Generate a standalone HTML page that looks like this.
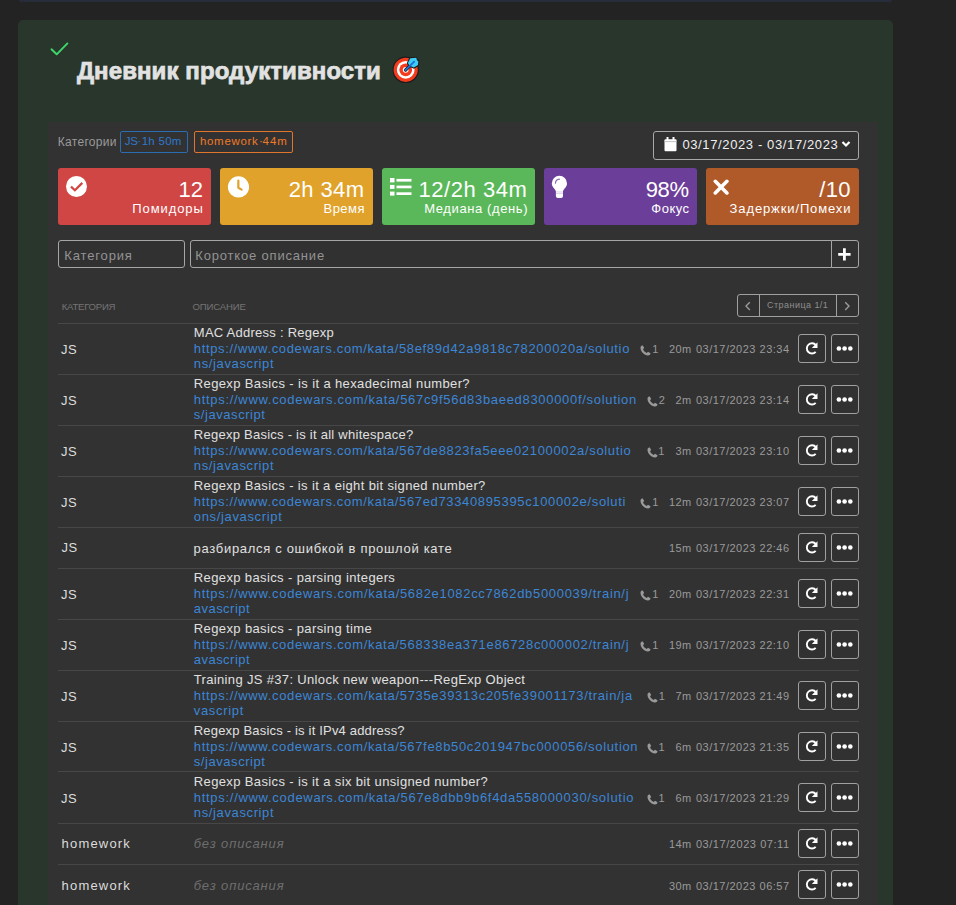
<!DOCTYPE html>
<html><head><meta charset="utf-8">
<style>
*{box-sizing:border-box;margin:0;padding:0}
html,body{width:956px;height:905px;overflow:hidden;background:#232323}
body{position:relative;font-family:"Liberation Sans",sans-serif;color:#ddd}
.a{position:absolute}
.t{position:absolute;white-space:pre;line-height:1}
#strip{left:19px;top:0;width:873px;height:2px;background:#262c39;border-radius:0 0 4px 4px}
#card{left:18px;top:20px;width:875px;height:920px;background:#29362c;border-radius:5px}
#panel{left:48px;top:122px;width:830px;height:800px;background:#323232}
.tag{position:absolute;top:131px;height:22px;border:1px solid;border-radius:2px}
.stat{position:absolute;top:168px;width:153px;height:57px;border-radius:3px}
.inp{position:absolute;top:240px;height:28px;border:1px solid #a6a6a6;background:#313131}
.btn{position:absolute;width:29px;height:29px;border:1px solid #a0a0a0;border-radius:3px;background:#313131}
.rl{position:absolute;left:58px;width:801px;height:1px;background:#474747}
</style></head>
<body>
<div id="strip" class="a"></div>
<div id="card" class="a"></div>
<svg class="a" style="left:48px;top:40px" width="24" height="18" viewBox="0 0 24 18"><path d="M3.5 9.3 L8.7 14.3 L19.4 3.4" fill="none" stroke="#3fd86a" stroke-width="1.9" stroke-linecap="round" stroke-linejoin="round"/></svg>
<svg class="a" style="left:391px;top:55px" width="30" height="30" viewBox="0 0 30 30">
<circle cx="14.7" cy="14.8" r="13.2" fill="#1c1c1c"/>
<circle cx="14.7" cy="14.8" r="12.1" fill="#f23c1d"/>
<circle cx="14.7" cy="14.8" r="8.9" fill="#fff"/>
<circle cx="14.7" cy="14.8" r="6.4" fill="#f23c1d"/>
<circle cx="14.7" cy="14.8" r="2.9" fill="#fff"/>
<path d="M14.6 15 L22 7.6" stroke="#1c1c1c" stroke-width="3.2" stroke-linecap="round"/>
<path d="M18.6 2.3 L26 1.8 L26.8 4.6 L28.4 5.2 L28 10.8 L23 13.8 L17.6 11.4 L15.8 8.2 Z" fill="#1c1c1c"/>
<path d="M19.3 3.3 L25.3 2.8 L26 5.4 L27.3 6 L27 10.1 L22.8 12.6 L18.4 10.6 L16.9 8 Z" fill="#3ccdf4"/>
<path d="M14.6 15 L23.2 6.6" stroke="#1f6fd8" stroke-width="1.8" stroke-linecap="round"/>
</svg>
<div id="panel" class="a"></div>
<div class="tag" style="left:120px;width:68px;border-color:#2a6db0"></div>
<div class="tag" style="left:194px;width:99px;border-color:#e0762c"></div>
<div class="a" style="left:653px;top:131px;width:206px;height:29px;border:1px solid #a8a8a8;border-radius:3px;background:#313131"></div>
<svg class="a" style="left:664px;top:137px" width="13" height="15" viewBox="0 0 13 15"><rect x="0.5" y="2.2" width="12" height="12" rx="1" fill="#fff"/><rect x="2.5" y="0" width="2" height="3" fill="#fff"/><rect x="8.5" y="0" width="2" height="3" fill="#fff"/><rect x="0.5" y="4.2" width="12" height="0.9" fill="#bbb"/></svg>
<svg class="a" style="left:841px;top:140px" width="10" height="8" viewBox="0 0 10 8"><path d="M1.5 2 L5 5.5 L8.5 2" fill="none" stroke="#fff" stroke-width="2.2"/></svg>

<div class="stat" style="left:58px;background:#d04644"><svg class="a" style="left:8px;top:8px" width="21" height="21" viewBox="0 0 21 21"><circle cx="10.5" cy="10.5" r="10.5" fill="#fff"/><path d="M5 10.6 L8.9 14.3 L16.3 6.9" fill="none" stroke="#d04644" stroke-width="2.2"/></svg></div>
<div class="stat" style="left:220px;background:#e0a22a"><svg class="a" style="left:7px;top:8px" width="22" height="22" viewBox="0 0 22 22"><circle cx="11.5" cy="10.9" r="10.6" fill="#fff"/><path d="M11.35 4.6 L11.35 11.7 L14.6 13.6" fill="none" stroke="#e0a22a" stroke-width="2.2" stroke-linecap="round" stroke-linejoin="round"/></svg></div>
<div class="stat" style="left:382px;background:#5bb85a"><svg class="a" style="left:7px;top:10px" width="23" height="18" viewBox="0 0 23 18"><rect x="1" y="0" width="4.5" height="4.4" fill="#fff"/><rect x="1" y="6.9" width="4.5" height="4" fill="#fff"/><rect x="1" y="13.6" width="4.5" height="4" fill="#fff"/><rect x="7.5" y="0.9" width="15" height="2.7" fill="#fff"/><rect x="7.5" y="7.6" width="15" height="2.7" fill="#fff"/><rect x="7.5" y="14.3" width="15" height="2.7" fill="#fff"/></svg></div>
<div class="stat" style="left:544px;background:#6b3e99"><svg class="a" style="left:7px;top:7px" width="17" height="24" viewBox="0 0 17 24"><path d="M4.9 16.4 C4.5 13.8 0.8 12.2 0.8 8.4 A7.6 7.6 0 0 1 16 8.4 C16 12.2 12.4 13.8 12 16.4 Z" fill="#fff"/><path d="M4.9 16.2 L12 16.2 L12 21 Q12 22.9 10 22.9 L6.9 22.9 Q4.9 22.9 4.9 21 Z" fill="#fff"/><rect x="4.9" y="17.7" width="7.1" height="0.9" fill="#cdbde0"/><path d="M4.4 8.1 C4.6 6 6.3 4.4 8.4 4.2" fill="none" stroke="#8d6ab5" stroke-width="1.2" stroke-linecap="round"/></svg></div>
<div class="stat" style="left:706px;background:#b05a2a"><svg class="a" style="left:7px;top:11px" width="16" height="16" viewBox="0 0 16 16"><path d="M2.3 2.3 L13.9 13.9 M13.9 2.3 L2.3 13.9" stroke="#fff" stroke-width="3.6" stroke-linecap="round"/></svg></div>

<div class="inp" style="left:58px;width:127px;border-radius:3px"></div>
<div class="inp" style="left:190px;width:642px;border-radius:3px 0 0 3px"></div>
<div class="inp" style="left:831px;width:28px;border-radius:0 3px 3px 0"></div>
<svg class="a" style="left:837px;top:247px" width="15" height="15" viewBox="0 0 15 15"><path d="M7.4 1.2 V13.6 M1.2 7.4 H13.6" stroke="#fff" stroke-width="2.8"/></svg>

<div class="a" style="left:737px;top:294px;width:122px;height:23px;border:1px solid #a0a0a0;border-radius:3px;background:#313131"></div>
<div class="a" style="left:759px;top:294px;width:1px;height:23px;background:#a0a0a0"></div>
<div class="a" style="left:836px;top:294px;width:1px;height:23px;background:#a0a0a0"></div>
<svg class="a" style="left:743px;top:301px" width="10" height="10" viewBox="0 0 10 10"><path d="M6.8 1.3 L3 5.1 L6.8 8.9" fill="none" stroke="#9a9a9a" stroke-width="1.4"/></svg>
<svg class="a" style="left:842px;top:301px" width="10" height="10" viewBox="0 0 10 10"><path d="M3.2 1.3 L7 5.1 L3.2 8.9" fill="none" stroke="#9a9a9a" stroke-width="1.4"/></svg>
<div class="rl" style="top:323px"></div>
<svg class="a" style="left:640.4px;top:345.0px" width="11" height="11" viewBox="0 0 11 11"><path d="M2.2 0.6 C1.2 0.9 0.4 1.8 0.5 3 C0.8 6.8 4.2 10.2 8 10.5 C9.2 10.6 10.1 9.8 10.4 8.8 L10.5 8.2 L8 6.8 L6.7 8 C5 7.2 3.8 6 3 4.3 L4.2 3 L2.8 0.5 Z" fill="#9a9a9a"/></svg>
<div class="btn" style="left:798px;top:334px;width:28px"></div><div class="btn" style="left:831px;top:334px;width:28px"></div>
<svg class="a" style="left:805px;top:342px" width="14" height="14" viewBox="0 0 14 14"><path d="M10.86 3.12 A5.1 5.1 0 1 0 10.68 9.88" fill="none" stroke="#fff" stroke-width="1.9"/><path d="M12.5 0.3 L12.5 6.1 L6.8 6.1 Z" fill="#fff"/></svg>
<svg class="a" style="left:836px;top:345px" width="18" height="7" viewBox="0 0 18 7"><circle cx="2.9" cy="3.5" r="2.3" fill="#fff"/><circle cx="8.6" cy="3.5" r="2.3" fill="#fff"/><circle cx="14.3" cy="3.5" r="2.3" fill="#fff"/></svg>
<div class="rl" style="top:374px"></div>
<svg class="a" style="left:647.0px;top:396.0px" width="11" height="11" viewBox="0 0 11 11"><path d="M2.2 0.6 C1.2 0.9 0.4 1.8 0.5 3 C0.8 6.8 4.2 10.2 8 10.5 C9.2 10.6 10.1 9.8 10.4 8.8 L10.5 8.2 L8 6.8 L6.7 8 C5 7.2 3.8 6 3 4.3 L4.2 3 L2.8 0.5 Z" fill="#9a9a9a"/></svg>
<div class="btn" style="left:798px;top:385px;width:28px"></div><div class="btn" style="left:831px;top:385px;width:28px"></div>
<svg class="a" style="left:805px;top:393px" width="14" height="14" viewBox="0 0 14 14"><path d="M10.86 3.12 A5.1 5.1 0 1 0 10.68 9.88" fill="none" stroke="#fff" stroke-width="1.9"/><path d="M12.5 0.3 L12.5 6.1 L6.8 6.1 Z" fill="#fff"/></svg>
<svg class="a" style="left:836px;top:396px" width="18" height="7" viewBox="0 0 18 7"><circle cx="2.9" cy="3.5" r="2.3" fill="#fff"/><circle cx="8.6" cy="3.5" r="2.3" fill="#fff"/><circle cx="14.3" cy="3.5" r="2.3" fill="#fff"/></svg>
<div class="rl" style="top:425px"></div>
<svg class="a" style="left:646.5px;top:447.0px" width="11" height="11" viewBox="0 0 11 11"><path d="M2.2 0.6 C1.2 0.9 0.4 1.8 0.5 3 C0.8 6.8 4.2 10.2 8 10.5 C9.2 10.6 10.1 9.8 10.4 8.8 L10.5 8.2 L8 6.8 L6.7 8 C5 7.2 3.8 6 3 4.3 L4.2 3 L2.8 0.5 Z" fill="#9a9a9a"/></svg>
<div class="btn" style="left:798px;top:436px;width:28px"></div><div class="btn" style="left:831px;top:436px;width:28px"></div>
<svg class="a" style="left:805px;top:444px" width="14" height="14" viewBox="0 0 14 14"><path d="M10.86 3.12 A5.1 5.1 0 1 0 10.68 9.88" fill="none" stroke="#fff" stroke-width="1.9"/><path d="M12.5 0.3 L12.5 6.1 L6.8 6.1 Z" fill="#fff"/></svg>
<svg class="a" style="left:836px;top:447px" width="18" height="7" viewBox="0 0 18 7"><circle cx="2.9" cy="3.5" r="2.3" fill="#fff"/><circle cx="8.6" cy="3.5" r="2.3" fill="#fff"/><circle cx="14.3" cy="3.5" r="2.3" fill="#fff"/></svg>
<div class="rl" style="top:476px"></div>
<svg class="a" style="left:640.4px;top:498.0px" width="11" height="11" viewBox="0 0 11 11"><path d="M2.2 0.6 C1.2 0.9 0.4 1.8 0.5 3 C0.8 6.8 4.2 10.2 8 10.5 C9.2 10.6 10.1 9.8 10.4 8.8 L10.5 8.2 L8 6.8 L6.7 8 C5 7.2 3.8 6 3 4.3 L4.2 3 L2.8 0.5 Z" fill="#9a9a9a"/></svg>
<div class="btn" style="left:798px;top:487px;width:28px"></div><div class="btn" style="left:831px;top:487px;width:28px"></div>
<svg class="a" style="left:805px;top:495px" width="14" height="14" viewBox="0 0 14 14"><path d="M10.86 3.12 A5.1 5.1 0 1 0 10.68 9.88" fill="none" stroke="#fff" stroke-width="1.9"/><path d="M12.5 0.3 L12.5 6.1 L6.8 6.1 Z" fill="#fff"/></svg>
<svg class="a" style="left:836px;top:498px" width="18" height="7" viewBox="0 0 18 7"><circle cx="2.9" cy="3.5" r="2.3" fill="#fff"/><circle cx="8.6" cy="3.5" r="2.3" fill="#fff"/><circle cx="14.3" cy="3.5" r="2.3" fill="#fff"/></svg>
<div class="rl" style="top:527px"></div>
<div class="btn" style="left:798px;top:533px;width:28px"></div><div class="btn" style="left:831px;top:533px;width:28px"></div>
<svg class="a" style="left:805px;top:541px" width="14" height="14" viewBox="0 0 14 14"><path d="M10.86 3.12 A5.1 5.1 0 1 0 10.68 9.88" fill="none" stroke="#fff" stroke-width="1.9"/><path d="M12.5 0.3 L12.5 6.1 L6.8 6.1 Z" fill="#fff"/></svg>
<svg class="a" style="left:836px;top:544px" width="18" height="7" viewBox="0 0 18 7"><circle cx="2.9" cy="3.5" r="2.3" fill="#fff"/><circle cx="8.6" cy="3.5" r="2.3" fill="#fff"/><circle cx="14.3" cy="3.5" r="2.3" fill="#fff"/></svg>
<div class="rl" style="top:568px"></div>
<svg class="a" style="left:640.4px;top:590.0px" width="11" height="11" viewBox="0 0 11 11"><path d="M2.2 0.6 C1.2 0.9 0.4 1.8 0.5 3 C0.8 6.8 4.2 10.2 8 10.5 C9.2 10.6 10.1 9.8 10.4 8.8 L10.5 8.2 L8 6.8 L6.7 8 C5 7.2 3.8 6 3 4.3 L4.2 3 L2.8 0.5 Z" fill="#9a9a9a"/></svg>
<div class="btn" style="left:798px;top:579px;width:28px"></div><div class="btn" style="left:831px;top:579px;width:28px"></div>
<svg class="a" style="left:805px;top:587px" width="14" height="14" viewBox="0 0 14 14"><path d="M10.86 3.12 A5.1 5.1 0 1 0 10.68 9.88" fill="none" stroke="#fff" stroke-width="1.9"/><path d="M12.5 0.3 L12.5 6.1 L6.8 6.1 Z" fill="#fff"/></svg>
<svg class="a" style="left:836px;top:590px" width="18" height="7" viewBox="0 0 18 7"><circle cx="2.9" cy="3.5" r="2.3" fill="#fff"/><circle cx="8.6" cy="3.5" r="2.3" fill="#fff"/><circle cx="14.3" cy="3.5" r="2.3" fill="#fff"/></svg>
<div class="rl" style="top:619px"></div>
<svg class="a" style="left:640.4px;top:641.0px" width="11" height="11" viewBox="0 0 11 11"><path d="M2.2 0.6 C1.2 0.9 0.4 1.8 0.5 3 C0.8 6.8 4.2 10.2 8 10.5 C9.2 10.6 10.1 9.8 10.4 8.8 L10.5 8.2 L8 6.8 L6.7 8 C5 7.2 3.8 6 3 4.3 L4.2 3 L2.8 0.5 Z" fill="#9a9a9a"/></svg>
<div class="btn" style="left:798px;top:630px;width:28px"></div><div class="btn" style="left:831px;top:630px;width:28px"></div>
<svg class="a" style="left:805px;top:638px" width="14" height="14" viewBox="0 0 14 14"><path d="M10.86 3.12 A5.1 5.1 0 1 0 10.68 9.88" fill="none" stroke="#fff" stroke-width="1.9"/><path d="M12.5 0.3 L12.5 6.1 L6.8 6.1 Z" fill="#fff"/></svg>
<svg class="a" style="left:836px;top:641px" width="18" height="7" viewBox="0 0 18 7"><circle cx="2.9" cy="3.5" r="2.3" fill="#fff"/><circle cx="8.6" cy="3.5" r="2.3" fill="#fff"/><circle cx="14.3" cy="3.5" r="2.3" fill="#fff"/></svg>
<div class="rl" style="top:670px"></div>
<svg class="a" style="left:647.0px;top:692.0px" width="11" height="11" viewBox="0 0 11 11"><path d="M2.2 0.6 C1.2 0.9 0.4 1.8 0.5 3 C0.8 6.8 4.2 10.2 8 10.5 C9.2 10.6 10.1 9.8 10.4 8.8 L10.5 8.2 L8 6.8 L6.7 8 C5 7.2 3.8 6 3 4.3 L4.2 3 L2.8 0.5 Z" fill="#9a9a9a"/></svg>
<div class="btn" style="left:798px;top:681px;width:28px"></div><div class="btn" style="left:831px;top:681px;width:28px"></div>
<svg class="a" style="left:805px;top:689px" width="14" height="14" viewBox="0 0 14 14"><path d="M10.86 3.12 A5.1 5.1 0 1 0 10.68 9.88" fill="none" stroke="#fff" stroke-width="1.9"/><path d="M12.5 0.3 L12.5 6.1 L6.8 6.1 Z" fill="#fff"/></svg>
<svg class="a" style="left:836px;top:692px" width="18" height="7" viewBox="0 0 18 7"><circle cx="2.9" cy="3.5" r="2.3" fill="#fff"/><circle cx="8.6" cy="3.5" r="2.3" fill="#fff"/><circle cx="14.3" cy="3.5" r="2.3" fill="#fff"/></svg>
<div class="rl" style="top:721px"></div>
<svg class="a" style="left:646.7px;top:743.0px" width="11" height="11" viewBox="0 0 11 11"><path d="M2.2 0.6 C1.2 0.9 0.4 1.8 0.5 3 C0.8 6.8 4.2 10.2 8 10.5 C9.2 10.6 10.1 9.8 10.4 8.8 L10.5 8.2 L8 6.8 L6.7 8 C5 7.2 3.8 6 3 4.3 L4.2 3 L2.8 0.5 Z" fill="#9a9a9a"/></svg>
<div class="btn" style="left:798px;top:732px;width:28px"></div><div class="btn" style="left:831px;top:732px;width:28px"></div>
<svg class="a" style="left:805px;top:740px" width="14" height="14" viewBox="0 0 14 14"><path d="M10.86 3.12 A5.1 5.1 0 1 0 10.68 9.88" fill="none" stroke="#fff" stroke-width="1.9"/><path d="M12.5 0.3 L12.5 6.1 L6.8 6.1 Z" fill="#fff"/></svg>
<svg class="a" style="left:836px;top:743px" width="18" height="7" viewBox="0 0 18 7"><circle cx="2.9" cy="3.5" r="2.3" fill="#fff"/><circle cx="8.6" cy="3.5" r="2.3" fill="#fff"/><circle cx="14.3" cy="3.5" r="2.3" fill="#fff"/></svg>
<div class="rl" style="top:771px"></div>
<svg class="a" style="left:646.7px;top:794.0px" width="11" height="11" viewBox="0 0 11 11"><path d="M2.2 0.6 C1.2 0.9 0.4 1.8 0.5 3 C0.8 6.8 4.2 10.2 8 10.5 C9.2 10.6 10.1 9.8 10.4 8.8 L10.5 8.2 L8 6.8 L6.7 8 C5 7.2 3.8 6 3 4.3 L4.2 3 L2.8 0.5 Z" fill="#9a9a9a"/></svg>
<div class="btn" style="left:798px;top:783px;width:28px"></div><div class="btn" style="left:831px;top:783px;width:28px"></div>
<svg class="a" style="left:805px;top:791px" width="14" height="14" viewBox="0 0 14 14"><path d="M10.86 3.12 A5.1 5.1 0 1 0 10.68 9.88" fill="none" stroke="#fff" stroke-width="1.9"/><path d="M12.5 0.3 L12.5 6.1 L6.8 6.1 Z" fill="#fff"/></svg>
<svg class="a" style="left:836px;top:794px" width="18" height="7" viewBox="0 0 18 7"><circle cx="2.9" cy="3.5" r="2.3" fill="#fff"/><circle cx="8.6" cy="3.5" r="2.3" fill="#fff"/><circle cx="14.3" cy="3.5" r="2.3" fill="#fff"/></svg>
<div class="rl" style="top:823px"></div>
<div class="btn" style="left:798px;top:829px;width:28px"></div><div class="btn" style="left:831px;top:829px;width:28px"></div>
<svg class="a" style="left:805px;top:837px" width="14" height="14" viewBox="0 0 14 14"><path d="M10.86 3.12 A5.1 5.1 0 1 0 10.68 9.88" fill="none" stroke="#fff" stroke-width="1.9"/><path d="M12.5 0.3 L12.5 6.1 L6.8 6.1 Z" fill="#fff"/></svg>
<svg class="a" style="left:836px;top:840px" width="18" height="7" viewBox="0 0 18 7"><circle cx="2.9" cy="3.5" r="2.3" fill="#fff"/><circle cx="8.6" cy="3.5" r="2.3" fill="#fff"/><circle cx="14.3" cy="3.5" r="2.3" fill="#fff"/></svg>
<div class="rl" style="top:864px"></div>
<div class="btn" style="left:798px;top:870px;width:28px"></div><div class="btn" style="left:831px;top:870px;width:28px"></div>
<svg class="a" style="left:805px;top:878px" width="14" height="14" viewBox="0 0 14 14"><path d="M10.86 3.12 A5.1 5.1 0 1 0 10.68 9.88" fill="none" stroke="#fff" stroke-width="1.9"/><path d="M12.5 0.3 L12.5 6.1 L6.8 6.1 Z" fill="#fff"/></svg>
<svg class="a" style="left:836px;top:881px" width="18" height="7" viewBox="0 0 18 7"><circle cx="2.9" cy="3.5" r="2.3" fill="#fff"/><circle cx="8.6" cy="3.5" r="2.3" fill="#fff"/><circle cx="14.3" cy="3.5" r="2.3" fill="#fff"/></svg>
<div class="t" style="top:58.68px;font-size:24px;color:#e2e2e2;letter-spacing:0.095px;font-weight:bold;-webkit-text-stroke:0.75px #e2e2e2;left:76.92px;">Дневник продуктивности</div>
<div class="t" style="top:136.14px;font-size:12px;color:#9a9a9a;letter-spacing:0.321px;left:57.66px;">Категории</div>
<div class="t" style="top:135.57px;font-size:11.5px;color:#2f78cc;letter-spacing:-0.300px;left:124.78px;">JS</div>
<div class="t" style="top:135.57px;font-size:11.5px;color:#2f78cc;letter-spacing:0.000px;left:137.18px;">·</div>
<div class="t" style="top:135.57px;font-size:11.5px;color:#2f78cc;letter-spacing:0.275px;left:141.68px;">1h 50m</div>
<div class="t" style="top:135.57px;font-size:11.5px;color:#f07a28;letter-spacing:0.682px;left:199.98px;">homework</div>
<div class="t" style="top:135.57px;font-size:11.5px;color:#f07a28;letter-spacing:0.000px;left:258.88px;">·</div>
<div class="t" style="top:135.57px;font-size:11.5px;color:#f07a28;letter-spacing:0.980px;left:262.58px;">44m</div>
<div class="t" style="top:138.20px;font-size:13px;color:#f0f0f0;letter-spacing:0.622px;left:682.41px;">03/17/2023 - 03/17/2023</div>
<div class="t" style="top:179.18px;font-size:22px;color:#fff;letter-spacing:-0.104px;left:178.61px;">12</div>
<div class="t" style="top:202.00px;font-size:13px;color:#fff;letter-spacing:0.914px;left:132.31px;">Помидоры</div>
<div class="t" style="top:179.18px;font-size:22px;color:#fff;letter-spacing:0.398px;left:288.71px;">2h 34m</div>
<div class="t" style="top:202.00px;font-size:13px;color:#fff;letter-spacing:0.500px;left:323.48px;">Время</div>
<div class="t" style="top:178.98px;font-size:22px;color:#fff;letter-spacing:0.539px;left:418.51px;">12/2h 34m</div>
<div class="t" style="top:202.00px;font-size:13px;color:#fff;letter-spacing:0.609px;left:424.22px;">Медиана (день)</div>
<div class="t" style="top:179.18px;font-size:22px;color:#fff;letter-spacing:-0.383px;left:645.71px;">98%</div>
<div class="t" style="top:202.00px;font-size:13px;color:#fff;letter-spacing:0.500px;left:651.27px;">Фокус</div>
<div class="t" style="top:179.18px;font-size:22px;color:#fff;letter-spacing:0.300px;left:819.30px;">/10</div>
<div class="t" style="top:202.00px;font-size:13px;color:#fff;letter-spacing:0.876px;left:729.61px;">Задержки/Помехи</div>
<div class="t" style="top:248.50px;font-size:13px;color:#939393;letter-spacing:0.849px;left:64.32px;">Категория</div>
<div class="t" style="top:248.50px;font-size:13px;color:#939393;letter-spacing:0.818px;left:195.31px;">Короткое описание</div>
<div class="t" style="top:301.87px;font-size:9.6px;color:#747474;letter-spacing:-0.247px;left:61.67px;">КАТЕГОРИЯ</div>
<div class="t" style="top:301.87px;font-size:9.6px;color:#747474;letter-spacing:-0.190px;left:192.57px;">ОПИСАНИЕ</div>
<div class="t" style="top:301.38px;font-size:9px;color:#8e8e8e;letter-spacing:0.445px;left:767.10px;">Страница 1/1</div>
<div class="t" style="top:342.50px;font-size:13px;color:#dcdcdc;letter-spacing:0.500px;left:60.91px;">JS</div>
<div class="t" style="top:326.20px;font-size:13px;color:#e0e0e0;letter-spacing:0.255px;left:193.81px;">MAC Address : Regexp</div>
<div class="t" style="top:342.10px;font-size:13px;color:#3c86d6;letter-spacing:0.648px;left:193.81px;">https://www.codewars.com/kata/58ef89d42a9818c78200020a/solutio</div>
<div class="t" style="top:357.20px;font-size:13px;color:#3c86d6;letter-spacing:0.627px;left:193.81px;">ns/javascript</div>
<div class="t" style="top:344.19px;font-size:11px;color:#9a9a9a;letter-spacing:0.503px;left:695.90px;">03/17/2023 23:34</div>
<div class="t" style="top:344.19px;font-size:11px;color:#9a9a9a;letter-spacing:0.450px;left:668.89px;">20m</div>
<div class="t" style="top:344.19px;font-size:11px;color:#9a9a9a;letter-spacing:0.500px;left:652.27px;">1</div>
<div class="t" style="top:393.50px;font-size:13px;color:#dcdcdc;letter-spacing:0.500px;left:60.91px;">JS</div>
<div class="t" style="top:377.20px;font-size:13px;color:#e0e0e0;letter-spacing:0.373px;left:193.81px;">Regexp Basics - is it a hexadecimal number?</div>
<div class="t" style="top:393.10px;font-size:13px;color:#3c86d6;letter-spacing:0.689px;left:193.81px;">https://www.codewars.com/kata/567c9f56d83baeed8300000f/solution</div>
<div class="t" style="top:408.20px;font-size:13px;color:#3c86d6;letter-spacing:0.558px;left:193.81px;">s/javascript</div>
<div class="t" style="top:395.19px;font-size:11px;color:#9a9a9a;letter-spacing:0.503px;left:695.90px;">03/17/2023 23:14</div>
<div class="t" style="top:395.19px;font-size:11px;color:#9a9a9a;letter-spacing:0.450px;left:675.46px;">2m</div>
<div class="t" style="top:395.19px;font-size:11px;color:#9a9a9a;letter-spacing:0.500px;left:658.87px;">2</div>
<div class="t" style="top:444.50px;font-size:13px;color:#dcdcdc;letter-spacing:0.500px;left:60.91px;">JS</div>
<div class="t" style="top:428.20px;font-size:13px;color:#e0e0e0;letter-spacing:0.253px;left:193.81px;">Regexp Basics - is it all whitespace?</div>
<div class="t" style="top:444.10px;font-size:13px;color:#3c86d6;letter-spacing:0.659px;left:193.81px;">https://www.codewars.com/kata/567de8823fa5eee02100002a/solutio</div>
<div class="t" style="top:459.20px;font-size:13px;color:#3c86d6;letter-spacing:0.627px;left:193.81px;">ns/javascript</div>
<div class="t" style="top:446.19px;font-size:11px;color:#9a9a9a;letter-spacing:0.503px;left:695.90px;">03/17/2023 23:10</div>
<div class="t" style="top:446.19px;font-size:11px;color:#9a9a9a;letter-spacing:0.450px;left:675.46px;">3m</div>
<div class="t" style="top:446.19px;font-size:11px;color:#9a9a9a;letter-spacing:0.500px;left:658.37px;">1</div>
<div class="t" style="top:495.50px;font-size:13px;color:#dcdcdc;letter-spacing:0.500px;left:60.91px;">JS</div>
<div class="t" style="top:479.20px;font-size:13px;color:#e0e0e0;letter-spacing:0.361px;left:193.81px;">Regexp Basics - is it a eight bit signed number?</div>
<div class="t" style="top:495.10px;font-size:13px;color:#3c86d6;letter-spacing:0.652px;left:193.81px;">https://www.codewars.com/kata/567ed73340895395c100002e/soluti</div>
<div class="t" style="top:510.20px;font-size:13px;color:#3c86d6;letter-spacing:0.653px;left:193.81px;">ons/javascript</div>
<div class="t" style="top:497.19px;font-size:11px;color:#9a9a9a;letter-spacing:0.503px;left:695.90px;">03/17/2023 23:07</div>
<div class="t" style="top:497.19px;font-size:11px;color:#9a9a9a;letter-spacing:0.450px;left:668.89px;">12m</div>
<div class="t" style="top:497.19px;font-size:11px;color:#9a9a9a;letter-spacing:0.500px;left:652.27px;">1</div>
<div class="t" style="top:541.20px;font-size:13px;color:#dcdcdc;letter-spacing:0.500px;left:61.62px;">JS</div>
<div class="t" style="top:541.60px;font-size:13px;color:#e0e0e0;letter-spacing:0.688px;left:193.61px;">разбирался с ошибкой в прошлой кате</div>
<div class="t" style="top:543.29px;font-size:11px;color:#9a9a9a;letter-spacing:0.503px;left:695.90px;">03/17/2023 22:46</div>
<div class="t" style="top:543.29px;font-size:11px;color:#9a9a9a;letter-spacing:0.450px;left:668.89px;">15m</div>
<div class="t" style="top:587.50px;font-size:13px;color:#dcdcdc;letter-spacing:0.500px;left:60.91px;">JS</div>
<div class="t" style="top:571.20px;font-size:13px;color:#e0e0e0;letter-spacing:0.379px;left:193.81px;">Regexp basics - parsing integers</div>
<div class="t" style="top:587.10px;font-size:13px;color:#3c86d6;letter-spacing:0.682px;left:193.81px;">https://www.codewars.com/kata/5682e1082cc7862db5000039/train/j</div>
<div class="t" style="top:602.20px;font-size:13px;color:#3c86d6;letter-spacing:0.467px;left:193.81px;">avascript</div>
<div class="t" style="top:589.19px;font-size:11px;color:#9a9a9a;letter-spacing:0.503px;left:695.90px;">03/17/2023 22:31</div>
<div class="t" style="top:589.19px;font-size:11px;color:#9a9a9a;letter-spacing:0.450px;left:668.89px;">20m</div>
<div class="t" style="top:589.19px;font-size:11px;color:#9a9a9a;letter-spacing:0.500px;left:652.27px;">1</div>
<div class="t" style="top:638.50px;font-size:13px;color:#dcdcdc;letter-spacing:0.500px;left:60.91px;">JS</div>
<div class="t" style="top:622.20px;font-size:13px;color:#e0e0e0;letter-spacing:0.383px;left:193.81px;">Regexp basics - parsing time</div>
<div class="t" style="top:638.10px;font-size:13px;color:#3c86d6;letter-spacing:0.670px;left:193.81px;">https://www.codewars.com/kata/568338ea371e86728c000002/train/j</div>
<div class="t" style="top:653.20px;font-size:13px;color:#3c86d6;letter-spacing:0.467px;left:193.81px;">avascript</div>
<div class="t" style="top:640.19px;font-size:11px;color:#9a9a9a;letter-spacing:0.503px;left:695.90px;">03/17/2023 22:10</div>
<div class="t" style="top:640.19px;font-size:11px;color:#9a9a9a;letter-spacing:0.450px;left:668.89px;">19m</div>
<div class="t" style="top:640.19px;font-size:11px;color:#9a9a9a;letter-spacing:0.500px;left:652.27px;">1</div>
<div class="t" style="top:689.50px;font-size:13px;color:#dcdcdc;letter-spacing:0.500px;left:60.91px;">JS</div>
<div class="t" style="top:673.20px;font-size:13px;color:#e0e0e0;letter-spacing:0.337px;left:193.81px;">Training JS #37: Unlock new weapon---RegExp Object</div>
<div class="t" style="top:689.10px;font-size:13px;color:#3c86d6;letter-spacing:0.675px;left:193.81px;">https://www.codewars.com/kata/5735e39313c205fe39001173/train/ja</div>
<div class="t" style="top:704.20px;font-size:13px;color:#3c86d6;letter-spacing:0.668px;left:193.81px;">vascript</div>
<div class="t" style="top:691.19px;font-size:11px;color:#9a9a9a;letter-spacing:0.503px;left:695.90px;">03/17/2023 21:49</div>
<div class="t" style="top:691.19px;font-size:11px;color:#9a9a9a;letter-spacing:0.450px;left:675.46px;">7m</div>
<div class="t" style="top:691.19px;font-size:11px;color:#9a9a9a;letter-spacing:0.500px;left:658.87px;">1</div>
<div class="t" style="top:740.50px;font-size:13px;color:#dcdcdc;letter-spacing:0.500px;left:60.91px;">JS</div>
<div class="t" style="top:724.20px;font-size:13px;color:#e0e0e0;letter-spacing:0.185px;left:193.81px;">Regexp Basics - is it IPv4 address?</div>
<div class="t" style="top:740.10px;font-size:13px;color:#3c86d6;letter-spacing:0.665px;left:193.81px;">https://www.codewars.com/kata/567fe8b50c201947bc000056/solution</div>
<div class="t" style="top:755.20px;font-size:13px;color:#3c86d6;letter-spacing:0.558px;left:193.81px;">s/javascript</div>
<div class="t" style="top:742.19px;font-size:11px;color:#9a9a9a;letter-spacing:0.503px;left:695.90px;">03/17/2023 21:35</div>
<div class="t" style="top:742.19px;font-size:11px;color:#9a9a9a;letter-spacing:0.450px;left:675.46px;">6m</div>
<div class="t" style="top:742.19px;font-size:11px;color:#9a9a9a;letter-spacing:0.500px;left:658.57px;">1</div>
<div class="t" style="top:791.50px;font-size:13px;color:#dcdcdc;letter-spacing:0.500px;left:60.91px;">JS</div>
<div class="t" style="top:775.20px;font-size:13px;color:#e0e0e0;letter-spacing:0.366px;left:193.81px;">Regexp Basics - is it a six bit unsigned number?</div>
<div class="t" style="top:791.10px;font-size:13px;color:#3c86d6;letter-spacing:0.703px;left:193.81px;">https://www.codewars.com/kata/567e8dbb9b6f4da558000030/solutio</div>
<div class="t" style="top:806.20px;font-size:13px;color:#3c86d6;letter-spacing:0.627px;left:193.81px;">ns/javascript</div>
<div class="t" style="top:793.19px;font-size:11px;color:#9a9a9a;letter-spacing:0.503px;left:695.90px;">03/17/2023 21:29</div>
<div class="t" style="top:793.19px;font-size:11px;color:#9a9a9a;letter-spacing:0.450px;left:675.46px;">6m</div>
<div class="t" style="top:793.19px;font-size:11px;color:#9a9a9a;letter-spacing:0.500px;left:658.57px;">1</div>
<div class="t" style="top:837.20px;font-size:13px;color:#dcdcdc;letter-spacing:1.172px;left:61.62px;">homework</div>
<div class="t" style="top:837.20px;font-size:13px;color:#6e6e6e;letter-spacing:0.831px;font-style:italic;left:193.72px;">без описания</div>
<div class="t" style="top:839.29px;font-size:11px;color:#9a9a9a;letter-spacing:0.557px;left:695.90px;">03/17/2023 07:11</div>
<div class="t" style="top:839.29px;font-size:11px;color:#9a9a9a;letter-spacing:0.450px;left:668.89px;">14m</div>
<div class="t" style="top:879.20px;font-size:13px;color:#dcdcdc;letter-spacing:1.172px;left:61.62px;">homework</div>
<div class="t" style="top:879.20px;font-size:13px;color:#6e6e6e;letter-spacing:0.831px;font-style:italic;left:193.72px;">без описания</div>
<div class="t" style="top:881.29px;font-size:11px;color:#9a9a9a;letter-spacing:0.503px;left:695.90px;">03/17/2023 06:57</div>
<div class="t" style="top:881.29px;font-size:11px;color:#9a9a9a;letter-spacing:0.450px;left:668.89px;">30m</div>
</body></html>
